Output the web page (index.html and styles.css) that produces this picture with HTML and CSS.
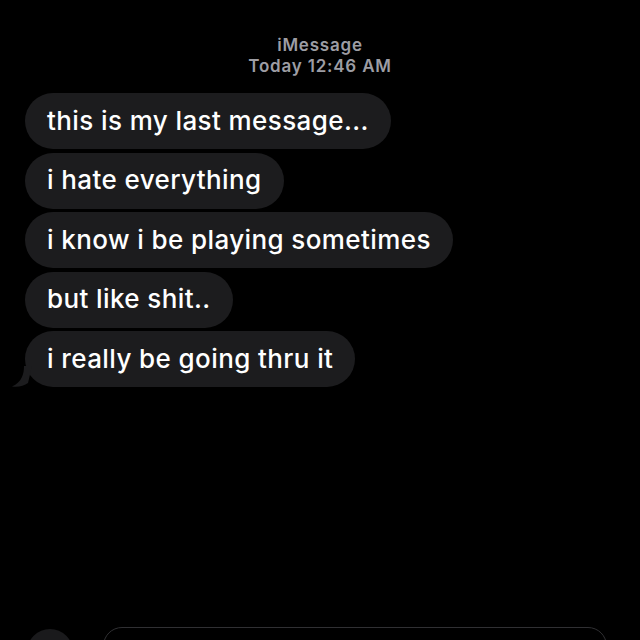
FILE: index.html
```html
<!DOCTYPE html>
<html>
<head>
<meta charset="utf-8">
<link rel="stylesheet" href="styles.css">
</head>
<body>
<div class="screen">
  <header class="header">
    <div class="service">iMessage</div>
    <div class="time"><span class="day">Today</span> 12:46 AM</div>
  </header>
  <main class="thread">
    <div class="bubble">this is my last message...</div>
    <div class="bubble">i hate everything</div>
    <div class="bubble">i know i be playing sometimes</div>
    <div class="bubble">but like shit..</div>
    <div class="bubble last">i really be going thru it<svg class="tail" width="20" height="22" viewBox="0 0 20 22"><path d="M12 0 C12 8 10 16 0 20.5 C6 21.5 12 20 16 17 L20 0 Z" fill="#1c1c1e"/></svg></div>
  </main>
  <footer class="composer">
    <div class="plus"></div>
    <div class="field"></div>
  </footer>
</div>
</body>
</html>
```
FILE: styles.css
```css
html, body {
  margin: 0;
  padding: 0;
  background: #000;
}
.screen {
  width: 640px;
  height: 640px;
  display: flex;
  flex-direction: column;
  overflow: hidden;
  font-family: Inter, "Noto Sans", sans-serif;
}
.header {
  padding-top: 35px;
  text-align: center;
  color: #9d9da4;
  font-size: 17px;
  font-weight: 600;
  line-height: 21px;
  letter-spacing: 0.8px;
}
.day {
  font-weight: 600;
}
.thread {
  margin-top: 16px;
  padding-left: 25px;
  display: flex;
  flex-direction: column;
  align-items: flex-start;
  gap: 3.5px;
}
.bubble {
  position: relative;
  height: 56px;
  box-sizing: border-box;
  padding: 0 22px 2px 22px;
  border-radius: 28px;
  background: #1c1c1e;
  color: #fff;
  font-size: 26px;
  font-weight: 500;
  display: flex;
  align-items: center;
  letter-spacing: 0.4px;
}
.tail {
  position: absolute;
  left: -13px;
  bottom: -1px;
}
.composer {
  margin-top: auto;
  height: 13px;
  display: flex;
  align-items: flex-start;
  padding-left: 27px;
}
.plus {
  width: 46px;
  height: 46px;
  border-radius: 50%;
  background: #1a1a1c;
  margin-top: 2px;
}
.field {
  margin-left: 30px;
  width: 504px;
  height: 38px;
  box-sizing: border-box;
  border: 1px solid #303033;
  border-radius: 19px;
}
```
